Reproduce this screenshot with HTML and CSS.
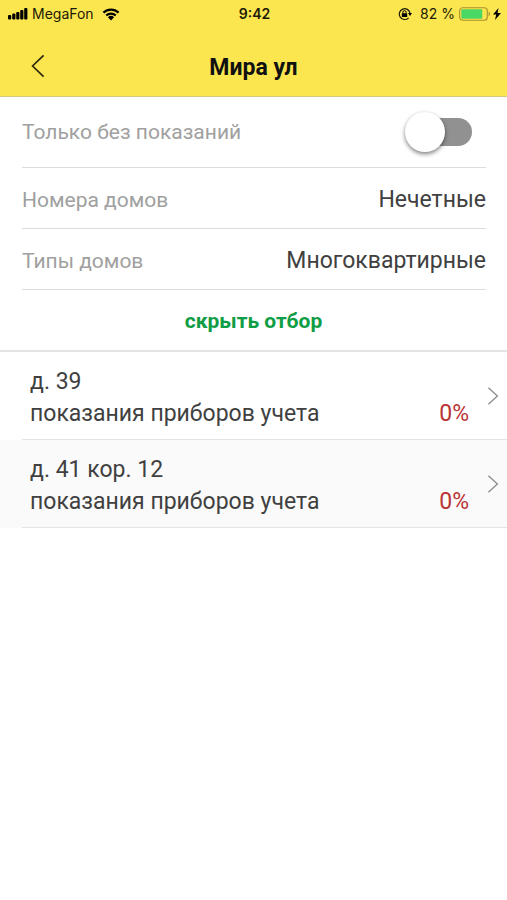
FILE: index.html
```html
<!DOCTYPE html>
<html lang="ru">
<head>
<meta charset="utf-8">
<meta name="viewport" content="width=device-width, initial-scale=1">
<title>Мира ул</title>
<link rel="stylesheet" href="styles.css">
</head>
<body>
<header class="top">
  <div class="status">
    <div class="status-side">
      <svg class="signal" width="20" height="12" viewBox="0 0 20 12" aria-hidden="true">
        <rect x="0" y="7" width="3.2" height="4.5" rx="1"/>
        <rect x="4.2" y="5.5" width="3.2" height="6" rx="1"/>
        <rect x="8.2" y="4" width="3.2" height="7.5" rx="1"/>
        <rect x="12.2" y="2" width="3.2" height="9.5" rx="1"/>
        <rect x="16.2" y="0" width="3.2" height="11.5" rx="1"/>
      </svg>
      <span class="carrier">MegaFon</span>
      <svg class="wifi" width="18" height="13" viewBox="0 0 18 13" aria-hidden="true">
        <path d="M1.4 4.6a11 11 0 0 1 15.2 0M4.2 7.5a7 7 0 0 1 9.6 0" fill="none" stroke="#000" stroke-width="2.2"/>
        <path d="M9 12.4 5.9 9.3a4.5 4.5 0 0 1 6.2 0z"/>
      </svg>
    </div>
    <span class="time">9:42</span>
    <div class="status-side status-right">
      <svg class="lock" width="14" height="14" viewBox="0 0 14 14" aria-hidden="true">
        <path d="M10.6 10.8A5.4 5.4 0 1 1 12 6.2" fill="none" stroke="#1c1a08" stroke-width="1.2"/>
        <path d="M10 6h4l-2 3z"/>
        <rect x="3.8" y="6.2" width="5.4" height="3.9" rx=".5"/>
        <path d="M4.9 6.5V5.2a1.6 1.6 0 0 1 3.2 0v1.3" fill="none" stroke="#000" stroke-width="1"/>
      </svg>
      <span class="percent">82 %</span>
      <svg class="battery" width="32" height="14" viewBox="0 0 32 14" aria-hidden="true">
        <rect x=".7" y=".7" width="27.6" height="12.6" rx="3" fill="none" stroke="#a8902f" stroke-width="1.1"/>
        <rect x="2.3" y="2.3" width="21" height="9.4" rx="1" fill="#4bd763"/>
        <path d="M29.6 4.7c1.8.5 1.8 4.1 0 4.6z" fill="#a8902f"/>
      </svg>
      <svg class="bolt" width="8" height="12" viewBox="0 0 8 12" aria-hidden="true">
        <path d="M5.5 0 0 6.6h3.2L2 12l6-7.1H4.6z"/>
      </svg>
    </div>
  </div>
  <div class="bar">
    <button class="back" type="button" aria-label="Назад">
      <svg width="14" height="24" viewBox="0 0 14 24" aria-hidden="true">
        <path d="M12.6 1.4 1.6 12l11 10.6" fill="none" stroke="#2e2a10" stroke-width="1.7"/>
      </svg>
    </button>
    <h1 class="title">Мира ул</h1>
  </div>
</header>
<main>
  <section class="filters">
    <div class="field field-tall">
      <label class="label" for="empty-only">Только без показаний</label>
      <input class="switch" id="empty-only" type="checkbox" role="switch">
    </div>
    <div class="field">
      <span class="label" id="numbers">Номера домов</span>
      <button class="value" type="button" aria-describedby="numbers">Нечетные</button>
    </div>
    <div class="field">
      <span class="label" id="types">Типы домов</span>
      <button class="value" type="button" aria-describedby="types">Многоквартирные</button>
    </div>
  </section>
  <button class="toggle" type="button">скрыть отбор</button>
  <ul class="houses">
    <li>
      <a class="house" href="#39">
        <span class="info">
          <span>д. 39</span>
          <span class="meter">показания приборов учета<span class="share">0%</span></span>
        </span>
        <svg class="chevron" width="12" height="18" viewBox="0 0 12 18" aria-hidden="true"><path d="m1.4.8 9 8.2-9 8.2" fill="none" stroke="#8f8f8f" stroke-width="1.4"/></svg>
      </a>
    </li>
    <li>
      <a class="house" href="#41-12">
        <span class="info">
          <span>д. 41 кор. 12</span>
          <span class="meter">показания приборов учета<span class="share">0%</span></span>
        </span>
        <svg class="chevron" width="12" height="18" viewBox="0 0 12 18" aria-hidden="true"><path d="m1.4.8 9 8.2-9 8.2" fill="none" stroke="#8f8f8f" stroke-width="1.4"/></svg>
      </a>
    </li>
  </ul>
</main>
</body>
</html>
```
FILE: styles.css
```css
* {
  box-sizing: border-box;
}

body {
  margin: 0;
  background: #fff;
  color: #404040;
  font: 23px/32px Roboto, "Liberation Sans", sans-serif;
}

button {
  padding: 0;
  border: 0;
  background: none;
  color: inherit;
  font: inherit;
  cursor: pointer;
}

svg {
  display: block;
  flex: none;
}

.top {
  background: #fce64f;
  border-bottom: 1px solid #d3c883;
}

.status {
  display: grid;
  grid-template-columns: 1fr auto 1fr;
  align-items: center;
  height: 28px;
  padding: 0 6px 0 8px;
  color: #1c1a08;
  font: 14px/20px Inter, "Liberation Sans", sans-serif;
}

.status-side {
  display: flex;
  align-items: center;
}

.status-right {
  justify-content: flex-end;
}

.carrier {
  margin: 0 8px 0 4px;
}

.time {
  font-weight: 600;
}

.percent {
  margin: 0 4px 0 8px;
}

.bolt {
  margin-left: 2px;
}

.bar {
  display: grid;
  grid-template-columns: 76px 1fr 76px;
  align-items: center;
  height: 68px;
  padding-top: 8px;
}

.back {
  display: flex;
  align-items: center;
  height: 48px;
  padding-left: 31px;
}

.title {
  margin: 0;
  padding-top: 4px;
  color: #111;
  font-size: 23px;
  font-weight: 700;
  text-align: center;
}

.filters {
  padding: 0 21px 0 22px;
}

.field {
  display: flex;
  align-items: center;
  justify-content: space-between;
  min-height: 61px;
  padding-top: 4px;
  border-bottom: 1px solid #dcdcdc;
}

.field-tall {
  min-height: 71px;
  padding-top: 0;
}

.label {
  color: #a0a0a0;
  font-size: 21px;
}

.switch {
  position: relative;
  width: 52px;
  height: 28px;
  margin: 0 14px 0 0;
  border-radius: 14px;
  background: #919191;
  appearance: none;
  cursor: pointer;
}

.switch::before {
  content: "";
  position: absolute;
  top: -6px;
  left: -15px;
  width: 40px;
  height: 40px;
  border-radius: 50%;
  background: #fff;
  box-shadow: 0 2px 4px rgba(0, 0, 0, 0.5);
}

.switch:checked::before {
  left: 27px;
}

.toggle {
  display: block;
  width: 100%;
  height: 62px;
  padding-top: 2px;
  border-bottom: 2px solid #e4e4e4;
  color: #0f9d45;
  font-size: 21px;
  font-weight: 700;
}

.houses {
  margin: 0;
  padding: 0;
  list-style: none;
}

.houses li {
  padding-left: 22px;
}

.houses li:nth-child(even) {
  background: #fafafa;
}

.house {
  display: flex;
  align-items: center;
  padding-right: 8px;
  border-bottom: 1px solid #e4e4e4;
  color: inherit;
  text-decoration: none;
}

.info {
  display: flex;
  flex: 1;
  flex-direction: column;
  padding: 14px 18px 9px 8px;
}

.meter {
  display: flex;
  justify-content: space-between;
}

.share {
  color: #b93434;
}
```
